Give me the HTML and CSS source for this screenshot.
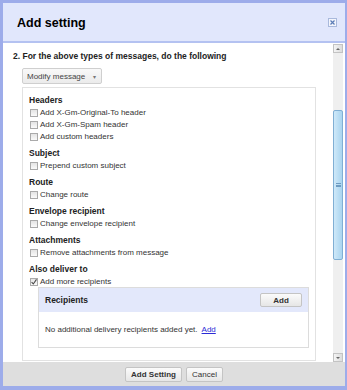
FILE: index.html
```html
<!DOCTYPE html>
<html lang="en">
<head>
  <meta charset="UTF-8" />
  <title>Add setting</title>
  <link rel="stylesheet" href="styles.css">
</head>
<body>

<div class="dialog">
  <!-- title bar -->
  <div class="dialog-head">
    <span class="dialog-title">Add setting</span>
    <span class="close-btn">
      <svg width="9" height="9" viewBox="0 0 9 9">
        <rect x="0.5" y="0.5" width="8" height="8" fill="#f3f5fc" stroke="#a9b9dc" />
        <path d="M2.5 2.5 L6.5 6.5 M6.5 2.5 L2.5 6.5" stroke="#5b7cb6" stroke-width="1.2" />
      </svg>
    </span>
  </div>

  <!-- scrolling body -->
  <div class="dialog-body">
    <div class="content">
      <p class="step">2. For the above types of messages, do the following</p>
      <div class="dropdown">Modify message <span class="caret">&#9662;</span></div>

      <div class="options">
        <div class="section">
          <div class="sec-title">Headers</div>
          <div class="item"><span class="cb"></span>Add X-Gm-Original-To header</div>
          <div class="item"><span class="cb"></span>Add X-Gm-Spam header</div>
          <div class="item"><span class="cb"></span>Add custom headers</div>
        </div>
        <div class="section">
          <div class="sec-title">Subject</div>
          <div class="item"><span class="cb"></span>Prepend custom subject</div>
        </div>
        <div class="section">
          <div class="sec-title">Route</div>
          <div class="item"><span class="cb"></span>Change route</div>
        </div>
        <div class="section">
          <div class="sec-title">Envelope recipient</div>
          <div class="item"><span class="cb"></span>Change envelope recipient</div>
        </div>
        <div class="section">
          <div class="sec-title">Attachments</div>
          <div class="item"><span class="cb"></span>Remove attachments from message</div>
        </div>
        <div class="section">
          <div class="sec-title">Also deliver to</div>
          <div class="item">
            <span class="cb checked">
              <svg width="6" height="6" viewBox="0 0 6 6"><path d="M0.6 3.2 L2.3 5 L5.5 0.4" fill="none" stroke="#4a4a4a" stroke-width="1.1" /></svg>
            </span>Add more recipients
          </div>

          <div class="recipients">
            <div class="rec-head">
              <span class="rec-title">Recipients</span>
              <span class="btn btn-small">Add</span>
            </div>
            <div class="rec-body">No additional delivery recipients added yet. <a href="#" class="link">Add</a></div>
          </div>
        </div>
      </div>
    </div>

    <!-- fake scrollbar -->
    <div class="scrollbar">
      <div class="sb-arrow"><span class="tri-up"></span></div>
      <div class="sb-track">
        <div class="sb-thumb"><span class="grip"></span></div>
      </div>
      <div class="sb-arrow"><span class="tri-down"></span></div>
    </div>
  </div>

  <!-- buttons -->
  <div class="dialog-foot">
    <span class="btn btn-strong">Add Setting</span>
    <span class="btn">Cancel</span>
  </div>
</div>

</body>
</html>
```

FILE: styles.css
```css
* { box-sizing: border-box; }
body {
  margin: 0;
  font-family: 'Liberation Sans', Arial, sans-serif;
  color: #222;
  background: #fff;
}
.dialog {
  width: 347px;
  height: 390px;
  border: solid #9dacea;
  border-width: 3px 2px 4px 3px;
  display: flex;
  flex-direction: column;
}
.dialog-head {
  height: 40px;
  flex: none;
  background-color: #e1e7fc;
  border-bottom: 2px solid #b4c2f1;
  display: flex;
  justify-content: space-between;
  padding: 12px 8px 0 14px;
}
.dialog-title {
  font-size: 12.5px;
  font-weight: bold;
  line-height: 16px;
  color: #000;
}
.close-btn {
  margin-top: 3px;
  height: 9px;
}
.close-btn svg { display: block; }

.dialog-body {
  flex: 1;
  display: flex;
  min-height: 0;
  background: #fff;
}
.content {
  flex: 1;
  overflow: hidden;
  padding: 7px 17px 0 10px;
}
.step {
  margin: 0;
  font-size: 8.5px;
  font-weight: bold;
  line-height: 12px;
  color: #222;
}
.dropdown {
  display: inline-flex;
  align-items: center;
  justify-content: space-between;
  width: 80px;
  height: 16px;
  margin: 6px 0 0 9px;
  padding: 0 5px 0 4px;
  font-size: 8px;
  color: #444;
  border: 1px solid #cfcfcf;
  border-radius: 2px;
  background: linear-gradient(#f9f9f9, #ebebeb);
}
.caret {
  font-size: 6px;
  color: #777;
}
.options {
  margin: 3px 0 0 9px;
  border: 1px solid #e2e2e2;
  padding: 6px 6px 12px 6px;
}
.section + .section { margin-top: 4px; }
.sec-title {
  font-size: 8.5px;
  font-weight: bold;
  line-height: 13px;
  color: #222;
}
.item {
  display: flex;
  align-items: center;
  font-size: 8px;
  line-height: 12px;
  color: #333;
}
.cb {
  width: 8px;
  height: 8px;
  margin: 0 2px 0 1px;
  border: 1px solid #aaa;
  background: linear-gradient(#e4e4e4, #fafafa);
  display: flex;
  align-items: center;
  justify-content: center;
}
.cb svg { display: block; }

.recipients {
  margin: -1px 0 0 9px;
  border: 1px solid #dcdcdc;
}
.rec-head {
  height: 24px;
  background-color: #e3e8fb;
  display: flex;
  align-items: center;
  justify-content: space-between;
  padding: 0 6px;
}
.rec-title {
  font-size: 8.5px;
  font-weight: bold;
  color: #222;
}
.rec-body {
  height: 35px;
  display: flex;
  align-items: center;
  padding: 0 6px;
  font-size: 8px;
  color: #333;
  background: #fff;
}
.link {
  color: #2b2bd6;
  margin-left: 4px;
}

.btn {
  display: inline-flex;
  align-items: center;
  justify-content: center;
  height: 15px;
  padding: 0 5px;
  font-size: 8px;
  color: #333;
  border: 1px solid #c4c4c4;
  border-radius: 2px;
  background: linear-gradient(#fbfbfb, #e6e6e6);
}
.btn-strong { font-weight: bold; width: 57px; }
.btn-small { font-weight: bold; width: 42px; height: 14px; }

.scrollbar {
  width: 12px;
  flex: none;
  padding: 1px 2px 0 0;
  display: flex;
  flex-direction: column;
  background: #fff;
}
.sb-arrow {
  height: 9px;
  flex: none;
  border: 1px solid #c3c3c3;
  background: linear-gradient(to right, #f4f4f4, #dcdcdc);
  display: flex;
  align-items: center;
  justify-content: center;
}
.tri-up, .tri-down {
  width: 0;
  height: 0;
  border-left: 2px solid transparent;
  border-right: 2px solid transparent;
}
.tri-up { border-bottom: 2px solid #666; }
.tri-down { border-top: 2px solid #666; }
.sb-track {
  flex: 1;
  background: #efefef;
  padding: 57px 0 93px 0;
}
.sb-thumb {
  height: 100%;
  border: 1px solid #80afd4;
  border-radius: 2px;
  background: linear-gradient(to right, #cfe9f9, #a9d4ef);
  display: flex;
  align-items: center;
  justify-content: center;
}
.grip {
  width: 5px;
  height: 4px;
  border-top: 1px solid #6e9cc2;
  border-bottom: 1px solid #6e9cc2;
  position: relative;
}
.grip::after {
  content: '';
  position: absolute;
  left: 0;
  right: 0;
  top: 1px;
  border-top: 1px solid #6e9cc2;
}

.dialog-foot {
  height: 24px;
  flex: none;
  background-color: #dedede;
  display: flex;
  align-items: center;
  justify-content: center;
  gap: 4px;
}
```
